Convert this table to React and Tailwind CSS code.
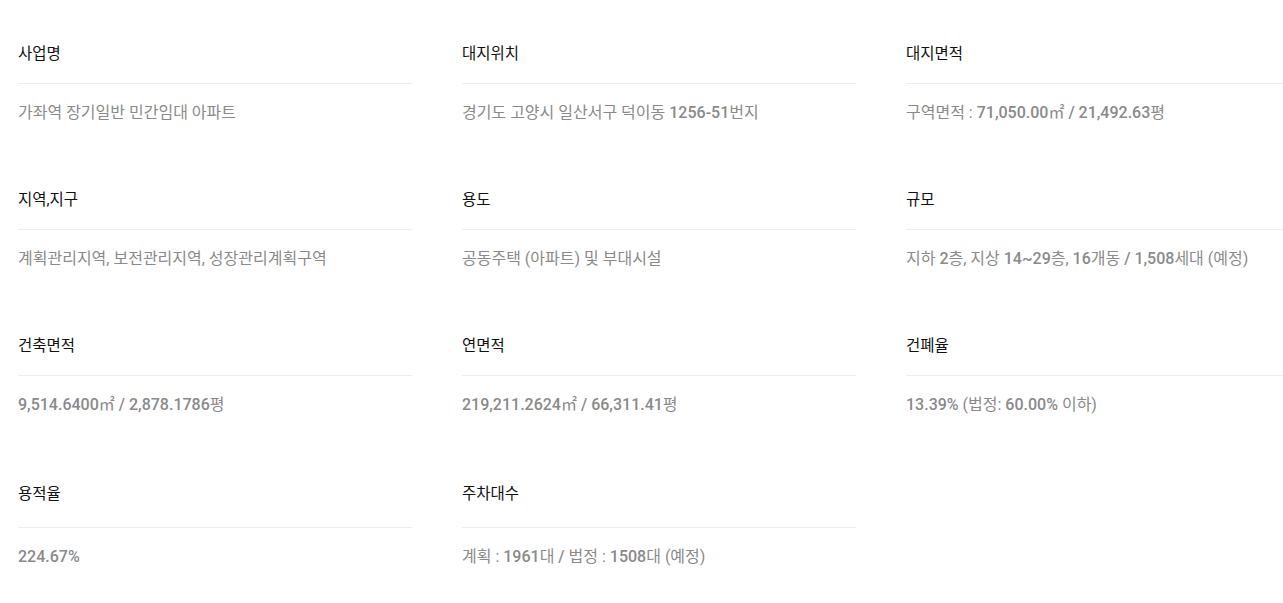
const ITEMS = [
  { label: '사업명', value: '가좌역 장기일반 민간임대 아파트' },
  { label: '대지위치', value: '경기도 고양시 일산서구 덕이동 1256-51번지' },
  { label: '대지면적', value: '구역면적 : 71,050.00㎡ / 21,492.63평' },
  { label: '지역,지구', value: '계획관리지역, 보전관리지역, 성장관리계획구역' },
  { label: '용도', value: '공동주택 (아파트) 및 부대시설' },
  { label: '규모', value: '지하 2층, 지상 14~29층, 16개동 / 1,508세대 (예정)' },
  { label: '건축면적', value: '9,514.6400㎡ / 2,878.1786평' },
  { label: '연면적', value: '219,211.2624㎡ / 66,311.41평' },
  { label: '건폐율', value: '13.39% (법정: 60.00% 이하)' },
  { label: '용적율', value: '224.67%', last: true },
  { label: '주차대수', value: '계획 : 1961대 / 법정 : 1508대 (예정)', last: true },
]

// numbers in the source render a touch heavier than the hangul around them
function Value({ text }) {
  const parts = text.split(/([0-9][0-9.,%~\-]*|\/)/)
  return parts.map((p, i) =>
    i % 2 === 1 ? (
      <span key={i} className="font-medium">
        {p}
      </span>
    ) : (
      p
    )
  )
}

export default function App() {
  return (
    <div
      className="min-h-[603px] w-full overflow-hidden bg-white"
      style={{ fontFamily: '"Roboto", "Noto Sans CJK KR", sans-serif' }}
    >
      <dl className="grid w-max grid-cols-[394px_394px_394px] gap-x-[50px] gap-y-[65px] pl-[18px] pt-[43px]">
        {ITEMS.map((item) => (
          <div key={item.label} className={item.last ? 'mt-[2px]' : ''}>
            <dt
              className={`border-b border-[#eeeeee] text-[15.5px] leading-[22px] text-[#111111] ${
                item.last ? 'pb-[22px]' : 'pb-[18px]'
              }`}
            >
              {item.label}
            </dt>
            <dd className="pt-[18px] text-[16px] leading-[22px] text-[#8a8a8a]">
              <Value text={item.value} />
            </dd>
          </div>
        ))}
      </dl>
    </div>
  )
}
